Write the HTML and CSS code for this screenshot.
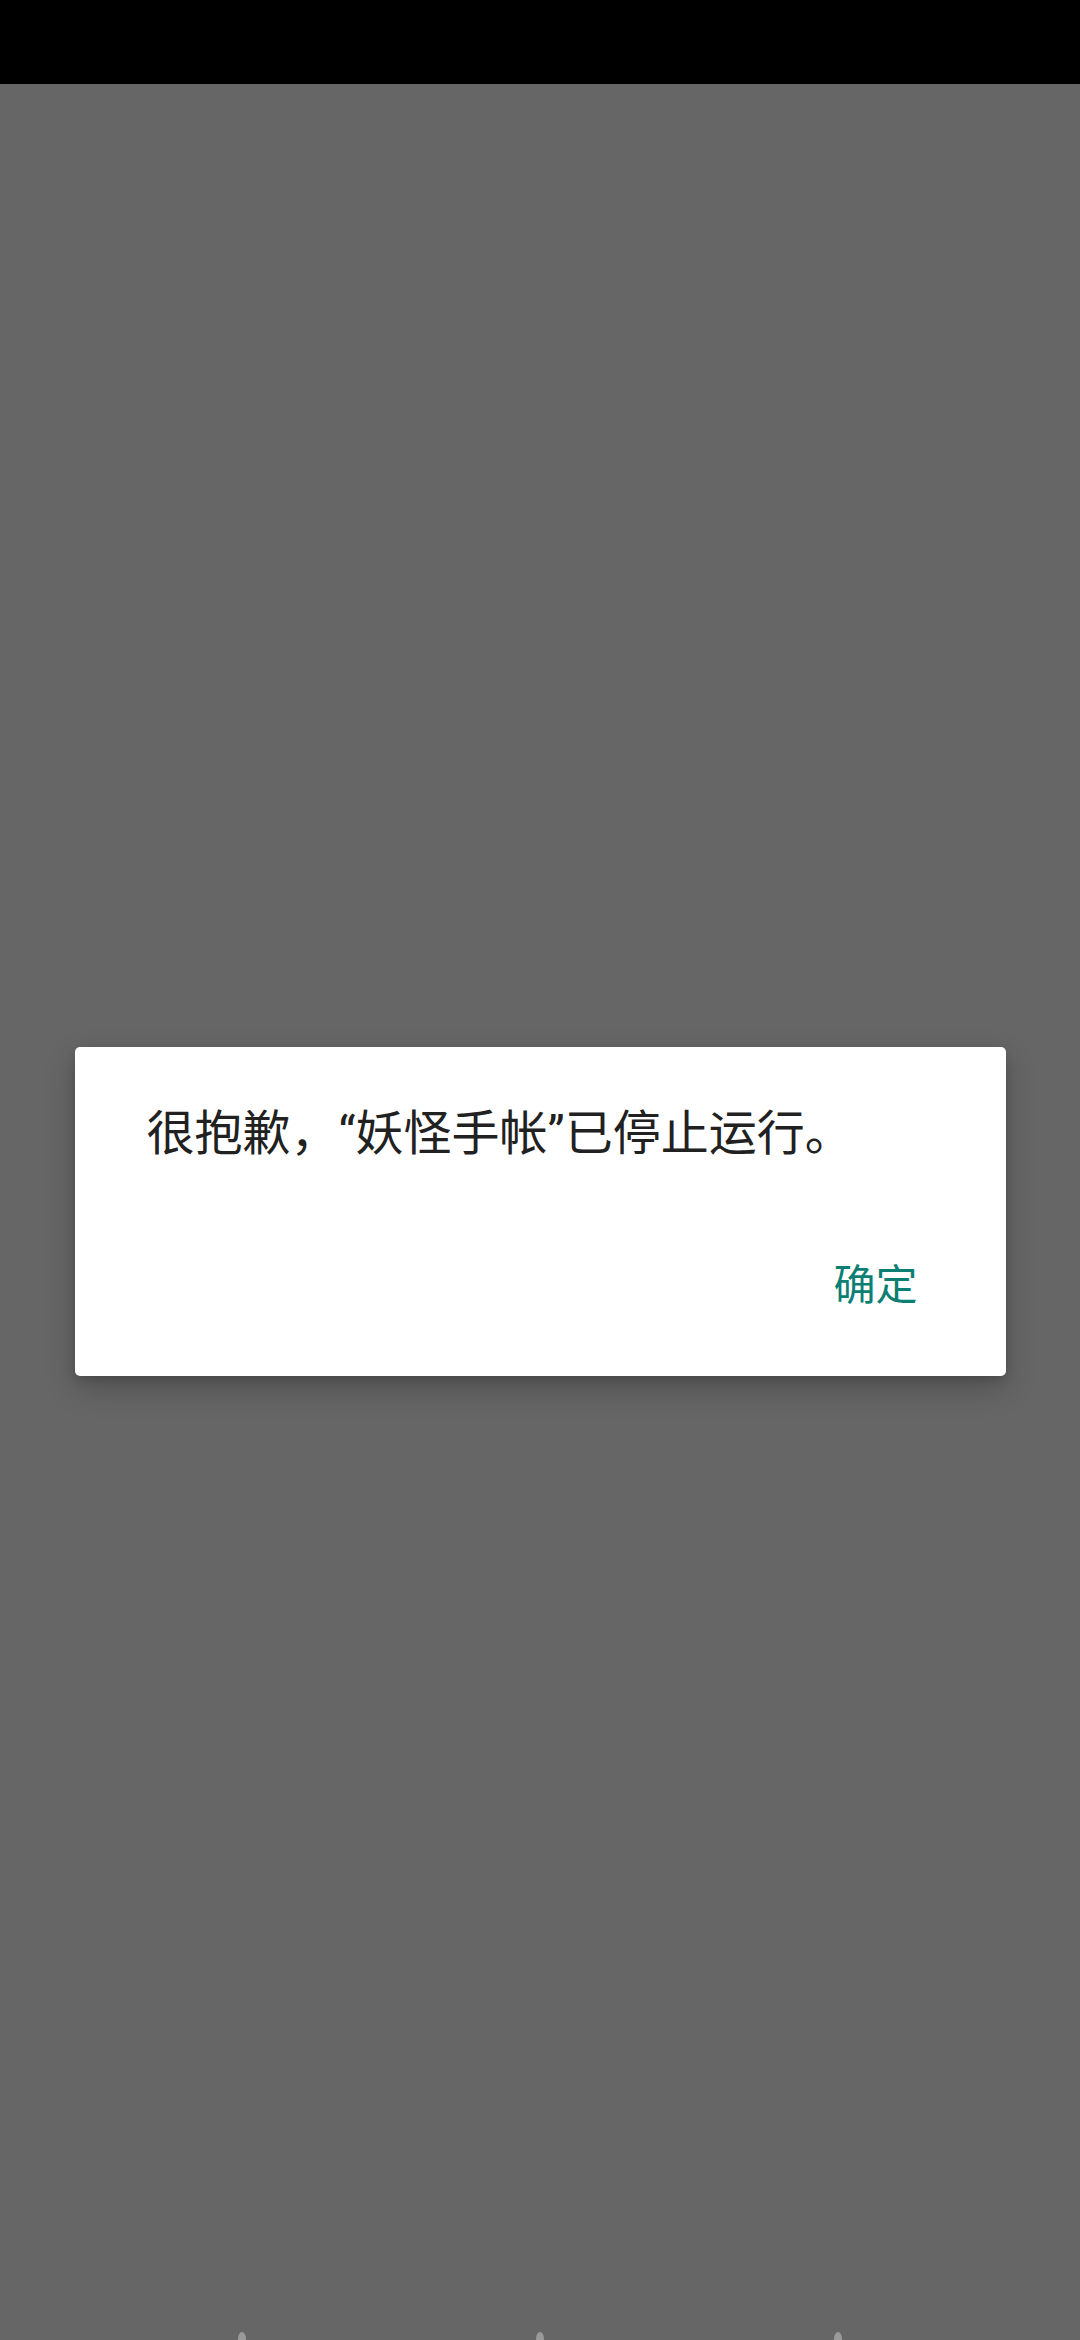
FILE: index.html
```html
<!DOCTYPE html>
<html lang="zh-CN">
<head>
<meta charset="utf-8">
<title>应用已停止</title>
<link rel="stylesheet" href="styles.css">
</head>
<body>
<div class="screen">
  <div class="status-bar"></div>
  <div class="stage">
    <div class="dialog">
      <p class="message">很抱歉，“妖怪手帐”已停止运行。</p>
      <div class="actions">
        <span class="btn">确定</span>
      </div>
    </div>
  </div>
  <div class="gesture-row">
    <span class="dot"></span>
    <span class="dot"></span>
    <span class="dot"></span>
  </div>
</div>
</body>
</html>
```
FILE: styles.css
```css
html, body {
  margin: 0;
  padding: 0;
  width: 1080px;
  height: 2340px;
  overflow: hidden;
  background: #666666;
}
.screen {
  width: 1080px;
  height: 2340px;
  display: flex;
  flex-direction: column;
  font-family: "Roboto", "Noto Sans CJK SC", sans-serif;
}
.status-bar {
  height: 84px;
  background: #000000;
  flex: none;
}
.stage {
  flex: 1;
  display: flex;
  align-items: center;
  justify-content: center;
  padding-top: 6px;
}
.dialog {
  width: 931px;
  box-sizing: border-box;
  background: #ffffff;
  border-radius: 5px;
  box-shadow: 0 12px 30px rgba(0, 0, 0, 0.22), 0 4px 10px rgba(0, 0, 0, 0.12);
  padding: 57px 88px 63px 72px;
  display: flex;
  flex-direction: column;
}
.message {
  margin: 0;
  font-size: 48px;
  line-height: 60px;
  color: #212121;
  white-space: nowrap;
}
.actions {
  display: flex;
  justify-content: flex-end;
  margin-top: 94px;
}
.btn {
  font-size: 42px;
  line-height: 55px;
  color: #0b7f73;
}
.gesture-row {
  height: 8px;
  flex: none;
  display: flex;
  justify-content: center;
  gap: 290px;
  overflow: hidden;
}
.dot {
  width: 8px;
  height: 14px;
  border-radius: 50%;
  background: #9a9a9a;
}
```
